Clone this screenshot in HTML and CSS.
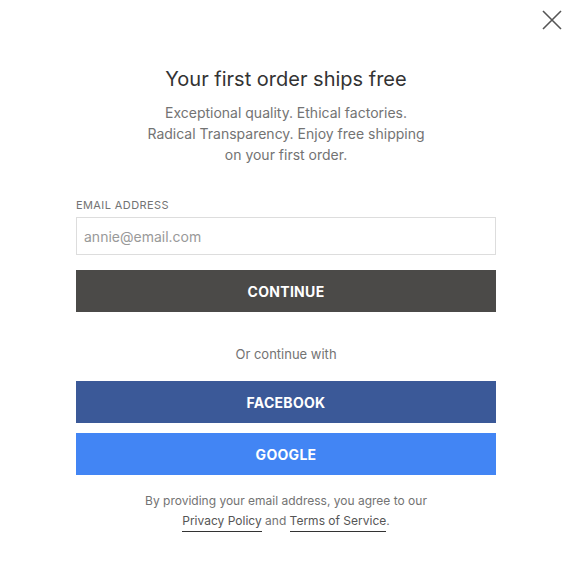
FILE: index.html
```html
<!DOCTYPE html>
<html>
<head>
<meta charset="utf-8">
<link rel="stylesheet" href="styles.css">
</head>
<body>
<div class="modal">
  <button class="close" aria-label="Close">
    <svg width="20" height="20" viewBox="0 0 20 20"><path d="M1 1L19 19M19 1L1 19" stroke="#555" stroke-width="1.6" fill="none"/></svg>
  </button>
  <div class="content">
    <h1 class="title">Your first order ships free</h1>
    <p class="sub">Exceptional quality. Ethical factories.<br>Radical Transparency. Enjoy free shipping<br>on your first order.</p>
    <label class="label">EMAIL ADDRESS</label>
    <input class="input" type="text" placeholder="annie@email.com">
    <button class="btn btn-dark">CONTINUE</button>
    <p class="or">Or continue with</p>
    <button class="btn btn-fb">FACEBOOK</button>
    <button class="btn btn-google">GOOGLE</button>
    <p class="legal">By providing your email address, you agree to our<br><a class="link">Privacy Policy</a> and <a class="link">Terms of Service</a>.</p>
  </div>
</div>
</body>
</html>
```
FILE: styles.css
```css
* { box-sizing: border-box; }
html, body { margin: 0; padding: 0; background: #fff; }
body { font-family: Inter, "Liberation Sans", sans-serif; color: #4a4947; }
.modal { position: relative; width: 574px; height: 565px; }
.close { position: absolute; top: 9px; right: 11px; width: 22px; height: 22px; padding: 1px; border: 0; background: none; }
.content { width: 420px; margin: 0 0 0 76px; padding-top: 65px; display: flex; flex-direction: column; }
.title { margin: 0; font-size: 20px; font-weight: 400; line-height: 28px; text-align: center; color: #333; }
.sub { margin: 9px 0 0; font-size: 14px; line-height: 21px; text-align: center; color: #737373; }
.label { margin-top: 33px; font-size: 11px; letter-spacing: 0.4px; color: #737373; line-height: 14px; }
.input { margin-top: 5px; height: 38px; border: 1px solid #ddd; padding: 0 7px; font-family: inherit; font-size: 14px; color: #333; }
.input::placeholder { color: #999; }
.btn { height: 42px; border: 0; color: #fff; font-family: inherit; font-weight: 700; font-size: 14px; letter-spacing: 0.3px; }
.btn-dark { margin-top: 15px; background: #4b4a48; }
.btn-fb { margin-top: 0; background: #3b5998; }
.btn-google { margin-top: 10px; background: #4285f4; }
.or { margin: 34px 0 19px; font-size: 13px; line-height: 16px; text-align: center; color: #737373; }
.legal { margin: 16px 0 0; font-size: 12px; line-height: 20px; text-align: center; color: #737373; }
.link { color: #555; display: inline-block; border-bottom: 1px solid #333; padding-bottom: 1px; line-height: 18px; }
```
